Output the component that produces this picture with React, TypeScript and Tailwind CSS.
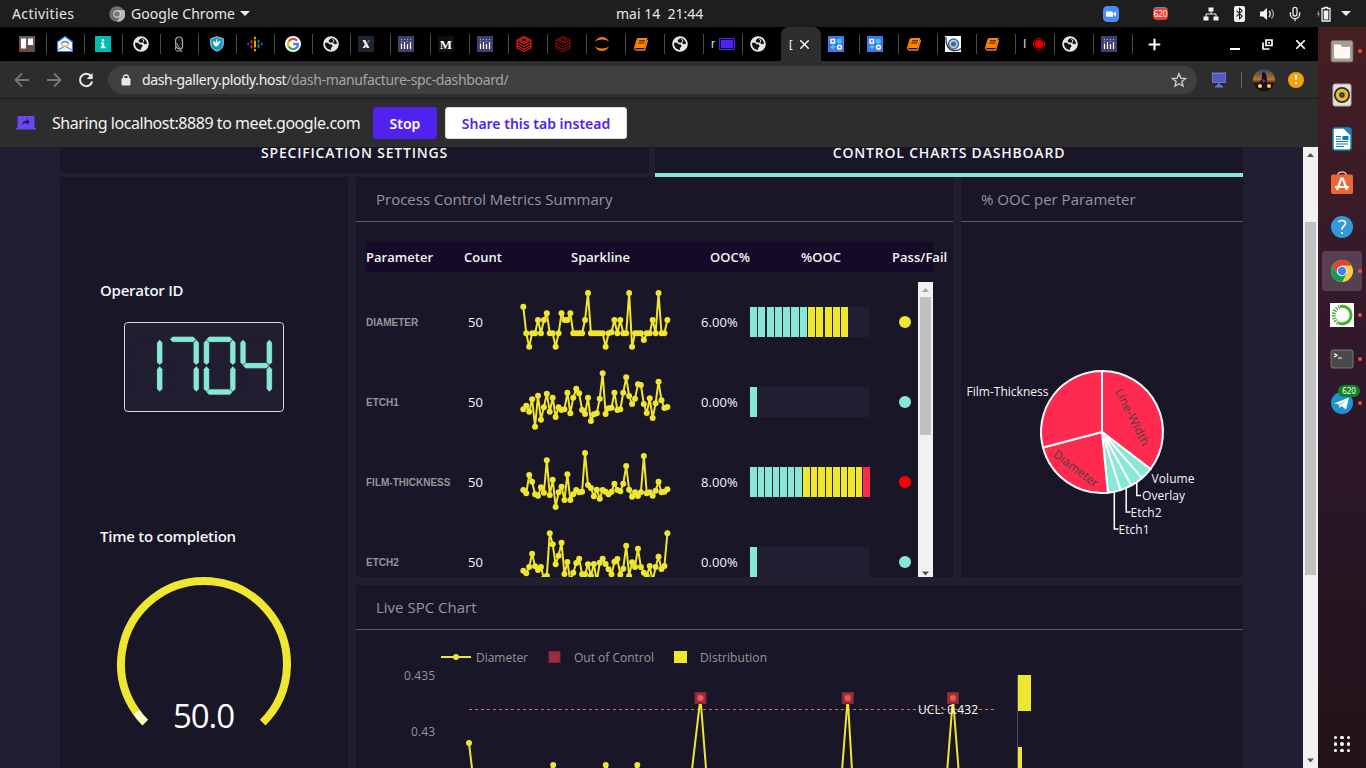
import React from "react";
import { ArrowLeft, ArrowRight, Star, X, Plus, Mic, Bluetooth } from "lucide-react";

const UI = "font-['Noto_Sans',sans-serif]";
const OPEN = "font-['Open_Sans',sans-serif]";

const TEAL = "#87e8d5";
const YELLOW = "#eee62f";

type Tone = "yellow" | "teal" | "red";

interface Metric {
  name: string;
  ooc: string;
  tone: Tone;
  fill: number;
  values: number[];
}

const diameter = [
  110, 190, 230, 190, 190, 150, 190, 150, 130, 190, 190, 230, 190, 130, 150, 150, 130, 190, 190, 190, 190, 150, 69, 190,
  190, 190, 190, 190, 230, 190, 187, 150, 190, 150, 190, 190, 69, 230, 190, 190, 190, 210, 190, 190, 150, 190, 69, 190,
  190, 150,
];
const etch1 = [
  178, 167, 185, 148, 230, 137, 209, 172, 131, 185, 143, 201, 172, 180, 178, 128, 190, 143, 116, 130, 180, 192, 143, 213,
  193, 190, 146, 70, 192, 175, 173, 128, 180, 178, 128, 82, 138, 162, 146, 103, 105, 162, 189, 145, 204, 160, 95, 151,
  174, 171,
];
const film = [
  180, 190, 135, 155, 193, 197, 172, 188, 91, 195, 149, 231, 187, 170, 210, 133, 210, 193, 180, 187, 185, 69, 165, 174,
  199, 179, 206, 180, 185, 193, 185, 161, 180, 184, 161, 108, 179, 200, 187, 198, 187, 78, 190, 187, 197, 182, 155, 187,
  185, 178,
];
const etch2 = [
  182, 190, 171, 131, 169, 180, 171, 205, 197, 70, 103, 163, 137, 98, 192, 156, 214, 188, 159, 146, 193, 193, 163, 197,
  162, 214, 158, 146, 162, 178, 193, 155, 147, 194, 176, 107, 198, 157, 171, 116, 171, 188, 197, 168, 214, 171, 140, 177,
  168, 70,
];

const metrics: Metric[] = [
  { name: "DIAMETER", ooc: "6.00%", tone: "yellow", fill: 12, values: diameter },
  { name: "ETCH1", ooc: "0.00%", tone: "teal", fill: 1, values: etch1 },
  { name: "FILM-THICKNESS", ooc: "8.00%", tone: "red", fill: 16, values: film },
  { name: "ETCH2", ooc: "0.00%", tone: "teal", fill: 1, values: etch2 },
];

function Sparkline({ values }: { values: number[] }) {
  const pts = values.map((v, i) => [7.3 + i * 2.94, v / 3]);
  return (
    <svg className="h-20 w-[160px] shrink-0" viewBox="0 0 160 80">
      <g transform="translate(0,-12)">
        <polyline points={pts.map((p) => p.join(",")).join(" ")} fill="none" stroke={YELLOW} strokeWidth="2" />
        {pts.map((p, i) => (
          <circle key={i} cx={p[0]} cy={p[1]} r="3" fill={YELLOW} />
        ))}
      </g>
    </svg>
  );
}

function GraduatedBar({ fill }: { fill: number }) {
  return (
    <div className={`flex h-[30px] w-[120px] shrink-0 bg-[#211e31] ${fill > 12 ? "gap-px" : ""}`}>
      {Array.from({ length: fill }, (_, i) => (
        <div
          key={i}
          className={`h-full ${fill > 12 ? "flex-1" : "mr-[1.25px] w-[7.05px] shrink-0"} ${
            i < 7 ? "bg-[#87e8d5]" : i < 15 ? "bg-[#eee62f]" : "bg-[#ff2a50]"
          }`}
        />
      ))}
    </div>
  );
}

const dotTone: Record<Tone, string> = {
  yellow: "bg-[#eee62f]",
  teal: "bg-[#87e8d5]",
  red: "bg-[#ff0000]",
};

function MetricRow({ m }: { m: Metric }) {
  return (
    <div className="flex h-20 shrink-0 items-center">
      <div className="w-[102px] text-[10px] font-bold whitespace-nowrap text-[#95969a] font-['Liberation_Sans',sans-serif]">{m.name}</div>
      <div className="w-12 pt-0.5 text-[13px] text-[#f3f5f4]">50</div>
      <Sparkline values={m.values} />
      <div className="ml-[25px] w-[49px] pt-0.5 text-[13px] tracking-[0.05px] text-[#f3f5f4]">{m.ooc}</div>
      <GraduatedBar fill={m.fill} />
      <div className={`ml-[29px] size-3 rounded-full ${dotTone[m.tone]}`} />
    </div>
  );
}

function Triangle({ down, color }: { down?: boolean; color: string }) {
  return (
    <svg className="h-4 w-[15px] shrink-0" viewBox="0 0 15 16">
      <path d={down ? "M4 6.500h7L7.500 10.500z" : "M4 10h7L7.500 6z"} fill={color} />
    </svg>
  );
}

function PanelTitle({ children }: { children: React.ReactNode }) {
  return (
    <div className="flex h-[45px] shrink-0 items-center border-b border-[#5a5864] px-5 text-[15px] text-[#95969a]">
      {children}
    </div>
  );
}

function LedDisplay() {
  const digits = ["bc", "abc", "abcdef", "bcfg"];
  const h = (x: number, y: number) => `${x},${y} ${x + 8},${y - 8} ${x + 70},${y - 8} ${x + 78},${y} ${x + 70},${y + 8} ${x + 8},${y + 8}`;
  const v = (x: number, y: number) => `${x},${y} ${x + 8},${y + 9} ${x + 8},${y + 68} ${x},${y + 76} ${x - 8},${y + 68} ${x - 8},${y + 9}`;
  return (
    <svg className="h-[90px] w-[160px]" viewBox="0 0 480 270">
      <rect x="1.500" y="1.500" width="477" height="267" rx="10" fill="#211e31" stroke="#d8d8dc" strokeWidth="3" />
      {digits.map((d, i) => {
        const r = 107 + i * 109.700;
        const l = r - 79;
        const segs: Record<string, string> = {
          a: h(l, 52),
          b: v(r, 53),
          c: v(r, 133),
          d: h(l, 210),
          e: v(l, 133),
          f: v(l, 53),
          g: h(l, 131),
        };
        return Object.entries(segs).map(([k, p]) => (
          <polygon key={k + i} points={p} fill={d.includes(k) ? TEAL : "#201d30"} stroke={d.includes(k) ? "#55888a" : "#201d30"} strokeWidth="0.8" />
        ));
      })}
    </svg>
  );
}

function Gauge() {
  const pt = (deg: number) => {
    const a = (deg * Math.PI) / 180;
    return `${90 + 83 * Math.cos(a)} ${90 + 83 * Math.sin(a)}`;
  };
  return (
    <svg className="h-[160px] w-[180px] overflow-visible" viewBox="0 0 180 160">
      <path d={`M${pt(145)}A83 83 0 1 1 ${pt(45)}`} fill="none" stroke={YELLOW} strokeWidth="8" />
      <path d={`M${pt(135)}A83 83 0 0 1 ${pt(145)}`} fill="none" stroke="#ffffc2" strokeWidth="8" />
      <text x="90" y="154" textAnchor="middle" fontSize="33" textLength="62" fill="#fff" fontWeight="400" className={OPEN}>50.0</text>
    </svg>
  );
}

function Pie() {
  const cx = 141;
  const cy = 210;
  const r = 61;
  const bounds = [0, 127.4, 139.2, 151.2, 162.4, 174.4, 255.3, 360];
  const fills = ["#ff2a50", TEAL, TEAL, TEAL, TEAL, "#ff2a50", "#ff2a50"];
  const p = (d: number) => {
    const a = ((d - 90) * Math.PI) / 180;
    return `${cx + r * Math.cos(a)} ${cy + r * Math.sin(a)}`;
  };
  return (
    <svg className="h-[355px] w-[282px]" viewBox="0 0 282 355">
      {fills.map((f, i) => (
        <path
          key={i}
          d={`M${cx} ${cy}L${p(bounds[i])}A${r} ${r} 0 0 1 ${p(bounds[i + 1])}Z`}
          fill={f}
          stroke="#fff"
          strokeWidth="2"
          strokeLinejoin="round"
        />
      ))}
      <g fill="none" stroke="#fff" strokeWidth="1.500">
        <path d="M175.800 260.500V273.500H180" />
        <path d="M165.200 266V290H169.500" />
        <path d="M153.300 270V307H157.500" />
      </g>
      <g fontSize="12" fill="#f5f5f5">
        <text x="5.500" y="174" textLength="82">Film-Thickness</text>
        <text x="190.500" y="261" textLength="43">Volume</text>
        <text x="181" y="278" textLength="43">Overlay</text>
        <text x="169.500" y="295" textLength="31">Etch2</text>
        <text x="157.500" y="312" textLength="31">Etch1</text>
      </g>
      <g fontSize="12" fill="#444" textAnchor="middle">
        <text transform="translate(167.500 197) rotate(63.500)" textLength="62">Line-Width</text>
        <text transform="translate(112.500 250) rotate(36.500)" textLength="53">Diameter</text>
      </g>
    </svg>
  );
}

function SpcChart() {
  const x = (i: number) => 469 + i * 10.52;
  const y = (v: number) => 698 + (v - 69) * 1.1;
  return (
    <svg className="h-[138px] w-[887px]" viewBox="356 630 887 138">
      <path d="M441 657h30" stroke={YELLOW} strokeWidth="2" />
      <circle cx="456" cy="657" r="3" fill={YELLOW} />
      <rect x="549" y="651.500" width="11" height="11" fill="#a02c42" stroke="#7d2439" />
      <rect x="674" y="651" width="13" height="12" fill={YELLOW} />
      <g fontSize="12" fill="#95969a">
        <text x="476" y="662" textLength="52">Diameter</text>
        <text x="574" y="662" textLength="80">Out of Control</text>
        <text x="700" y="662" textLength="67">Distribution</text>
        <text x="404" y="680" textLength="31">0.435</text>
        <text x="411" y="736" textLength="24">0.43</text>
      </g>
      <path d="M469 709.500H995" stroke="#e0704c" strokeWidth="1" strokeDasharray="3 3" />
      <polyline points={diameter.map((v, i) => `${x(i)},${y(v)}`).join(" ")} fill="none" stroke={YELLOW} strokeWidth="2" />
      {diameter.map((v, i) => (
        <circle key={i} cx={x(i)} cy={y(v)} r="3" fill={YELLOW} />
      ))}
      {[22, 36, 46].map((i) => (
        <g key={i}>
          <rect x={x(i) - 5.5} y="692.500" width="11" height="11" fill="#a02c42" stroke="#7d2439" />
          <circle cx={x(i)} cy="698" r="3" fill="#e4633f" />
        </g>
      ))}
      <text x="918" y="714" fontSize="12" textLength="60" fill="#fff">UCL: 0.432</text>
      <path d="M1017.500 675V768" stroke="#4c4a58" />
      <rect x="1018" y="675" width="13" height="36" fill={YELLOW} />
      <rect x="1018" y="747" width="4" height="21" fill={YELLOW} />
    </svg>
  );
}

/* ---------- browser tab favicons ---------- */

function Svg16({ children }: { children: React.ReactNode }) {
  return <svg className="size-4 shrink-0" viewBox="0 0 16 16">{children}</svg>;
}

const Globe = () => (
  <Svg16>
    <circle cx="8" cy="8" r="7.200" fill="#e6e6e6" />
    <path d="M1.500 6.800H5l1.300 1.500 2.400.2 1 1.500-1.600 2-.2 2.200Q1.500 14 1.500 6.800zM7 3l3-1.600q3.500 1 4.300 4.300l-.5 2.300-2.300.3-1.300-1.500-3.400-.3L5.500 5z" fill="#111" />
    <path d="M9.500 3l1.500 2-1.200 1.500" fill="none" stroke="#e6e6e6" strokeWidth="1" />
    <circle cx="8" cy="8" r="6.900" fill="none" stroke="#e6e6e6" strokeWidth="1.800" />
  </Svg16>
);

const Trello = () => (
  <Svg16>
    <rect width="16" height="16" rx="1" fill="#6f5a63" />
    <path d="M0 10h16v6H0z" fill="#6b4a42" />
    <path d="M2 2.500h5v10H2zM9 2.500h5v6.500H9z" fill="#fff" />
  </Svg16>
);
const House = () => (
  <Svg16>
    <path d="M8 .5L15.500 6v9.500H.5V6z" fill="#fff" stroke="#3b78d8" strokeWidth="1.200" />
    <path d="M1 14l7-4 7 4" fill="#e8f0fe" stroke="#3b78d8" />
    <path d="M4 7.500Q8 3.500 12 7.500" fill="none" stroke="#4c8be8" strokeWidth="1.500" />
    <path d="M4 8q4 5 8 0" fill="none" stroke="#f0b83a" strokeWidth="1.500" />
  </Svg16>
);
const InfoTile = () => (
  <Svg16>
    <path d="M0 0h16v16H0z" fill="#00bdb4" />
    <path d="M6 6.200h3.200v4.300h1.300v1.800H5.800v-1.800h1V8H6zM6.800 3.300h2.400v1.900H6.800z" fill="#e5ffff" />
  </Svg16>
);
const Clip = () => (
  <Svg16>
    <path d="M4.500 5q0-4 3.500-4t3.500 4v5.500q0 2.500-2.500 2.500-3 0-4.200-3z" fill="#111" stroke="#aaa" strokeWidth="1.200" />
    <path d="M5.500 7l4.500 7.500M4.500 11v2.500q0 1.500 3 1.500h4" fill="none" stroke="#aaa" />
  </Svg16>
);
const Shield = () => (
  <Svg16>
    <path d="M8 .7l6.300 2v5.500q0 4.500-6.300 7.100-6.300-2.600-6.300-7.100V2.700z" fill="#1597d1" stroke="#d7eef8" strokeWidth=".8" />
    <path d="M5 5l2 2V3.500h1.300V7L11 4.500l.6 1-2 3.300q-2 3-4.500.5L4 6.500z" fill="#fff" />
  </Svg16>
);
const Podcasts = () => (
  <Svg16>
    <g strokeWidth="1.900" strokeLinecap="round" fill="none">
      <path d="M1.200 7.500v1" stroke="#4b31e8" />
      <path d="M14.800 7.500v1" stroke="#4b31e8" />
      <path d="M4.500 5v2M4.500 10v1.500" stroke="#d93025" />
      <path d="M8 1.500v1M8 5.200v5.600M8 13.700v.8" stroke="#f9ab00" />
      <path d="M11.500 4.500V6M11.500 8.500v3" stroke="#18943d" />
    </g>
  </Svg16>
);
const Google = () => (
  <Svg16>
    <circle cx="8" cy="8" r="8" fill="#fff" />
    <g fill="none" strokeWidth="2.300">
      <path d="M12 4.700A5 5 0 0 0 3.800 5.400" stroke="#ea4335" />
      <path d="M3.800 5.300a5 5 0 0 0 0 5.300" stroke="#fbbc05" />
      <path d="M3.700 10.500a5 5 0 0 0 7.700 1.400" stroke="#34a853" />
      <path d="M11.300 12A5 5 0 0 0 13 8H8" stroke="#4285f4" />
    </g>
  </Svg16>
);
const XTile = () => (
  <Svg16>
    <path d="M0 0h16v16H0z" fill="#202431" />
    <path d="M4.500 4h2.800l4.200 8H8.800z" fill="#f2f2f2" />
    <path d="M7 8.500L4.500 12h2.300l1.500-2z" fill="#f2f2f2" />
    <path d="M9 6.500L10.500 4h1.700L9.800 7.700z" fill="#3d6fb8" />
  </Svg16>
);
const Plotly = () => (
  <Svg16>
    <path d="M0 0h16v16H0z" fill="#453f74" />
    <path d="M3.500 7.500V13M6.500 6v7M9.500 8v5M12.500 6v7" stroke="#fff" strokeWidth="1.200" />
    <path d="M3.500 3v3M6.500 3v2M9.500 3v4M12.500 3v2" stroke="#6fd6c0" strokeWidth="1.100" strokeDasharray="1 1" />
  </Svg16>
);
const Medium = () => (
  <div className="flex size-4 shrink-0 items-center justify-center bg-[#12100e] font-['Liberation_Serif',serif] text-[13px] leading-none font-bold text-white">M</div>
);
const Stack = ({ color }: { color: string }) => (
  <Svg16>
    <g fill="none" stroke={color} strokeWidth="1.200" strokeLinejoin="round">
      <path d="M1 4l7-3.500L15 4 8 7.500zM1 4v3l7 3.500L15 7V4M1 7v2.800l7 3.500 7-3.500V7M1 9.800V12l7 3.500 7-3.500V9.800" />
      <path d="M4 4l4-2 4 2-4 2z" />
    </g>
  </Svg16>
);
const Jupyter = () => (
  <Svg16>
    <path d="M1 5.500Q3.500 1 8 1t7 4.500Q12 3.600 8 3.600T1 5.500zM1 10.500Q3.500 15 8 15t7-4.500q-3 1.900-7 1.900t-7-1.900z" fill="#f57c00" />
  </Svg16>
);
const Book = () => (
  <Svg16>
    <path d="M5 2h9.500l-3 10H2z" fill="#ff8400" />
    <path d="M6 4.800h6M5.300 7h6" stroke="#2a1500" strokeWidth="1" />
    <path d="M4.500 2.500L1.500 12q.2 2 2 2h8l3-10" fill="none" stroke="#ff8400" strokeWidth="1.300" />
  </Svg16>
);
const Presenting = () => (
  <Svg16>
    <path d="M.5 2.500h15v11H.5z" fill="#0a0630" stroke="#5022f0" />
    <path d="M2 4h12v8H2z" fill="#5022f0" />
  </Svg16>
);
const BlueTile = () => (
  <Svg16>
    <path d="M0 0h16v16H0z" fill="#4674ee" />
    <g fill="none" stroke="#fff" strokeWidth="1.500">
      <path d="M3 3.500h3.500V7H3z" />
      <circle cx="11.500" cy="11.200" r="1.900" />
    </g>
    <path d="M8.500 5.200q.2-2.600 2.700-2.700t2.500 2.600-2.500 2.500-2.700-2.400z" fill="#29d3f5" />
    <path d="M5 8.800v4.500M2.700 11h4.600" stroke="#29d3f5" strokeWidth="1.800" />
  </Svg16>
);
const Camera = () => (
  <Svg16>
    <path d="M0 0h16v16H0z" fill="#fff" />
    <circle cx="8.500" cy="8" r="5" fill="#b7d4ee" stroke="#2e6db4" strokeWidth="1.500" />
    <circle cx="8.500" cy="8" r="2.600" fill="#666" />
    <path d="M1 1q-.5 12 7 13.500 5 .8 8-2" fill="none" stroke="#333" strokeWidth="1.300" />
  </Svg16>
);
const Record = () => (
  <Svg16>
    <circle cx="8" cy="8" r="5.600" fill="none" stroke="#c00" strokeWidth="1" />
    <circle cx="8" cy="8" r="4.300" fill="#e00000" />
  </Svg16>
);

interface Tab {
  icon: React.ReactNode;
  width: string;
  label?: string;
}

const W38 = "w-[38px] pl-2.5 border-r";
const W40 = "w-10 pl-[7px] border-r";
const W39 = "w-[39px] pl-[7px] border-r";
const leftTabs: Tab[] = [
  { icon: <Trello />, width: W38 },
  { icon: <House />, width: W38 },
  { icon: <InfoTile />, width: W38 },
  { icon: <Globe />, width: W38 },
  { icon: <Clip />, width: W38 },
  { icon: <Shield />, width: W38 },
  { icon: <Podcasts />, width: W38 },
  { icon: <Google />, width: W38 },
  { icon: <Globe />, width: W38 },
  { icon: <XTile />, width: W40 },
  { icon: <Plotly />, width: W40 },
  { icon: <Medium />, width: W39 },
  { icon: <Plotly />, width: W39 },
  { icon: <Stack color="#e2211c" />, width: W39 },
  { icon: <Stack color="#7a0d0d" />, width: W39 },
  { icon: <Jupyter />, width: W39 },
  { icon: <Book />, width: W39 },
  { icon: <Globe />, width: W39 },
  { icon: <Presenting />, width: W39, label: "r" },
  { icon: <Globe />, width: "w-[38px] pl-[7px]" },
];
const rightTabs: Tab[] = [
  { icon: <BlueTile />, width: W39 },
  { icon: <BlueTile />, width: W39 },
  { icon: <Book />, width: W39 },
  { icon: <Camera />, width: W39 },
  { icon: <Book />, width: W39 },
  { icon: <Record />, width: W39, label: "I" },
  { icon: <Globe />, width: W39 },
  { icon: <Plotly />, width: W39 },
];

function TabCell({ tab }: { tab: Tab }) {
  return (
    <div className={`flex h-5 shrink-0 items-center border-[#4b4b4b] ${tab.width}`}>
      {tab.label && <span className="w-2 shrink-0 font-['Liberation_Sans',sans-serif] text-[12px] text-[#ddd]">{tab.label}</span>}
      {tab.icon}
    </div>
  );
}

/* ---------- dock ---------- */

const dockIcons: { id: string; running?: boolean; active?: boolean; art: React.ReactNode }[] = [
  {
    id: "files",
    running: true,
    art: (
      <>
        <rect x="1" y="1.500" width="22" height="21.500" rx="2" fill="#a79f90" stroke="#6d665b" />
        <path d="M4 5.500h6.500l1.500 2.500h8v10.500q0 1-1 1H5q-1 0-1-1z" fill="#fbfaf8" />
      </>
    ),
  },
  {
    id: "rhythmbox",
    art: (
      <>
        <rect x="3" y="1" width="18" height="22" rx="2" fill="#e5e1d8" stroke="#b5afa3" />
        <circle cx="12" cy="12" r="8" fill="#2b2b2b" />
        <circle cx="12" cy="12" r="4.500" fill="none" stroke="#e9b92c" strokeWidth="3.500" />
        <circle cx="12" cy="12" r="1.500" fill="#555" />
      </>
    ),
  },
  {
    id: "writer",
    art: (
      <>
        <path d="M5 1h9l7 7v13q0 2-2 2H5q-2 0-2-2V3q0-2 2-2z" fill="#fff" stroke="#1584c0" strokeWidth="1.500" />
        <path d="M13 .3h6q2.700 0 2.700 2.700v6z" fill="#1584c0" />
        <path d="M6 9.500h5M6 12h5M6 14.500h12M6 17h12M6 19.500h8" stroke="#1177b0" strokeWidth="1.200" />
        <path d="M12.500 9h6v4h-6z" fill="#1177b0" />
      </>
    ),
  },
  {
    id: "software",
    art: (
      <>
        <path d="M8 4q0-3 4-3t4 3" fill="none" stroke="#e9b89a" strokeWidth="1.500" />
        <rect x="1" y="3.500" width="22" height="19.500" rx="2" fill="#ee6630" />
        <path d="M7 19l4.200-11.500h1.600L17 19M5 16h14" fill="none" stroke="#fff" strokeWidth="2.200" />
      </>
    ),
  },
  {
    id: "help",
    art: (
      <>
        <circle cx="12" cy="12" r="11" fill="#3498dd" />
        <path d="M8.500 7q1.500-1.500 3.500-1.500 3.500 0 3.500 2.700 0 1.700-2 3.200-1.700 1.300-1.600 3.300M12 17v2" fill="none" stroke="#fff" strokeWidth="1.700" />
      </>
    ),
  },
  {
    id: "chrome",
    running: true,
    active: true,
    art: (
      <>
        <circle cx="12" cy="12" r="11" fill="#ffcd40" />
        <path d="M2.500 6.500A11 11 0 0 1 21.500 6.500H12L7.200 14.700z" fill="#db4437" />
        <path d="M2.500 6.500A11 11 0 0 0 12 23l4.800-8.200H7.200z" fill="#0f9d58" />
        <circle cx="12" cy="12" r="5.200" fill="#f1f1f1" />
        <circle cx="12" cy="12" r="4.200" fill="#4285f4" />
      </>
    ),
  },
  {
    id: "anaconda",
    running: true,
    art: (
      <>
        <path d="M0 0h24v24H0z" fill="#fff" />
        <path d="M10 3.500A8.800 8.800 0 1 1 8.500 20" fill="none" stroke="#43b02a" strokeWidth="3" />
        <path d="M9.500 4A8.800 8.800 0 0 0 8.500 20" fill="none" stroke="#43b02a" strokeWidth="4" strokeDasharray="1.300 1.300" />
      </>
    ),
  },
  {
    id: "terminal",
    running: true,
    art: (
      <>
        <rect x="1" y="3" width="22" height="18" rx="2" fill="#4a4a4a" stroke="#777" />
        <path d="M4 6.500l3 1.800-3 1.800M8 11h4" fill="none" stroke="#fff" strokeWidth="1.200" />
      </>
    ),
  },
  {
    id: "telegram",
    running: true,
    art: (
      <>
        <circle cx="12" cy="12" r="11" fill="#2192cf" />
        <path d="M4 12.500l15-6-3 12-4.500-3.500-2.200 2-.7-4z" fill="#fff" />
        <path d="M8.600 13L17 8l-6 6.500-1.700 2.500z" fill="#bcd8e8" />
      </>
    ),
  },
];

function Dock() {
  return (
    <aside className="flex w-12 shrink-0 flex-col items-center bg-linear-to-b from-[#451e22] via-[#2d172c] to-[#211318] pt-0.5">
      {dockIcons.map((d) => (
        <div key={d.id} className="relative flex h-11 w-full shrink-0 items-center justify-center">
          <div className={`flex size-10 items-center justify-center rounded ${d.active ? "bg-[#56404f]" : ""}`}>
            <svg className="size-6" viewBox="0 0 24 24">{d.art}</svg>
          </div>
          {d.running && <i className="absolute top-5 right-1 size-1 rounded-full bg-[#e95420]" />}
          {d.id === "telegram" && (
            <b className="absolute top-[4px] left-[20px] flex h-3 w-[22px] items-center justify-center rounded-full bg-[#0e8420] text-[8px] leading-none font-normal text-white">620</b>
          )}
        </div>
      ))}
      <div className="mt-auto mb-4 grid grid-cols-3 gap-[3px]">
        {Array.from({ length: 9 }, (_, i) => (
          <i key={i} className="size-[3.300px] rounded-full bg-white" />
        ))}
      </div>
    </aside>
  );
}

/* ---------- desktop bar ---------- */

function TopBar() {
  return (
    <header className="flex h-[27px] shrink-0 items-center bg-[#1e1e1e] text-[14px] text-[#e6e6e6]">
      <span className="ml-3 w-[97px] tracking-[0.4px]">Activities</span>
      <svg className="size-4" viewBox="0 0 16 16">
        <circle cx="8" cy="8" r="7.800" fill="#6e6e6e" />
        <path d="M8 4h7.200a7.800 7.800 0 0 1-7.500 11.800L11.500 10z" fill="#b8b8b8" />
        <circle cx="8" cy="8" r="3.700" fill="#ddd" />
        <circle cx="8" cy="8" r="2.800" fill="#777" />
      </svg>
      <span className="ml-1.5 w-[104px] tracking-[0.05px] whitespace-nowrap">Google Chrome</span>
      <svg className="ml-[5px] h-[5px] w-2.5" viewBox="0 0 10 5"><path d="M0 0h10L5 5z" fill="#eee" /></svg>
      <span className="ml-[366px] w-[90px] whitespace-pre">{"mai 14  21:44"}</span>
      <svg className="ml-[397px] size-4" viewBox="0 0 16 16">
        <rect width="16" height="16" rx="4.500" fill="#4a8cff" />
        <path d="M3 5.500h5.500q1.500 0 1.500 1.500v3.700H4.500Q3 10.700 3 9.200zM10.500 7.300L13 5.500v5l-2.500-1.700z" fill="#fff" />
      </svg>
      <div className="ml-[34px] flex h-[13px] w-[15px] items-center justify-center rounded-sm border-t border-[#2c9bd0] bg-[#f03c32] text-[8px] leading-none text-white">620</div>
      <svg className="ml-[35px] size-4" viewBox="0 0 16 16">
        <path d="M5.500 1.500h5v4h-5zM.5 10.500h5v4h-5zM10.500 10.500h5v4h-5z" fill="#f2f2f2" />
        <path d="M8 5v3M3 11V8h10v3" fill="none" stroke="#f2f2f2" />
      </svg>
      <span className="ml-[15px] flex h-4 w-[11px] items-center justify-center rounded-xs bg-[#f2f2f2] text-[#1e1e1e]">
        <Bluetooth className="shrink-0" size={13} strokeWidth={2} />
      </span>
      <svg className="ml-[14px] h-4 w-[17px]" viewBox="0 0 17 16">
        <path d="M1 5.500h3L8 2v12L4 10.500H1z" fill="#f2f2f2" />
        <path d="M10 5q2.500 3 0 6" fill="none" stroke="#f2f2f2" strokeWidth="1.300" />
        <path d="M12.500 3.500q4 4.500 0 9" fill="none" stroke="#aaa" strokeWidth="1.200" />
      </svg>
      <Mic className="ml-[11px]" size={16} strokeWidth={2} />
      <svg className="ml-[13px] h-4 w-[15px]" viewBox="0 0 15 16">
        <path d="M3 4L1 8.500h1.500L2 12l2-4.500H2.800z" fill="#aaa" />
        <path d="M6 2.500h2.500v-1h3v1H14v12.500H6z" fill="none" stroke="#f2f2f2" strokeWidth="1.300" />
        <path d="M7.700 4.500h4.600v9H7.700z" fill="#f2f2f2" />
      </svg>
      <svg className="ml-[10px] h-[5px] w-2.5" viewBox="0 0 10 5"><path d="M0 0h10L5 5z" fill="#eee" /></svg>
    </header>
  );
}

function BrowserChrome() {
  return (
    <>
      <div className="flex h-[34px] shrink-0 items-center bg-black pl-[9px]">
        {leftTabs.map((t, i) => <TabCell key={i} tab={t} />)}
        <div className="flex h-full w-10 shrink-0 items-center rounded-t-lg bg-[#2d2d2d] pl-2 text-[11px] text-white">
          <span className="w-2">[</span>
          <X size={15} strokeWidth={2.2} />
        </div>
        {rightTabs.map((t, i) => <TabCell key={i} tab={t} />)}
        <Plus className="ml-[13px] text-white" size={17} strokeWidth={3} />
        <div className="mt-[9px] ml-[67px] h-0.5 w-2.5 bg-white" />
        <svg className="ml-[22px] size-[11px]" viewBox="0 0 11 11">
          <path d="M4 1h6v5.500H4zM1 3.500v6.500h6.500" fill="none" stroke="#fff" strokeWidth="1.700" />
          <path d="M6 3h2v1.500H6z" fill="#fff" />
        </svg>
        <X className="ml-[20px] text-white" size={15} strokeWidth={2.8} />
      </div>
      <div className="flex h-[37px] shrink-0 items-center bg-[#2d2d2d] text-[#e8eaed]">
        <svg className="ml-[14px] h-4 w-4" viewBox="0 0 16 16">
          <path d="M15 8H2M8 1.500L1.500 8 8 14.500" fill="none" stroke="#777" strokeWidth="1.800" />
        </svg>
        <svg className="ml-4 h-4 w-4" viewBox="0 0 16 16">
          <path d="M1 8h13M8 1.500L14.500 8 8 14.500" fill="none" stroke="#777" strokeWidth="1.800" />
        </svg>
        <svg className="ml-[15px] size-[18px]" viewBox="0 0 18 18">
          <path d="M14 5A6.200 6.200 0 1 0 15.200 10.500" fill="none" stroke="#e8e8e8" strokeWidth="2" />
          <path d="M15.700 2v6H9.700z" fill="#e8e8e8" />
        </svg>
        <div className="ml-[13px] flex h-7 w-[1089px] items-center rounded-full bg-[#3f3f3f] pr-[10px] pl-[13px]">
          <svg className="h-3 w-[10px]" viewBox="0 0 10 12">
            <path d="M1 4.500h8V11H1z" fill="#e8e8e8" stroke="#e8e8e8" strokeWidth="1" strokeLinejoin="round" />
            <path d="M2.700 4.500V3q0-2 2.300-2t2.300 2v1.500" fill="none" stroke="#e8e8e8" strokeWidth="1.300" />
          </svg>
          <span className="ml-[11px] text-[14px] tracking-[-0.35px] whitespace-nowrap text-[#f1f1f1]">
            dash-gallery.plotly.host<span className="text-[#a5a5a5]">/dash-manufacture-spc-dashboard/</span>
          </span>
          <svg className="ml-auto size-4" viewBox="0 0 16 16">
            <path d="M8 1.800l1.800 4.300 4.700.4-3.600 3 1.100 4.600L8 11.700l-4 2.400 1.100-4.600-3.600-3 4.700-.4z" fill="none" stroke="#ccc" strokeWidth="1.400" />
          </svg>
        </div>
        <svg className="ml-[14px] size-4" viewBox="0 0 16 16">
          <path d="M.5 1h15M1.500 1.500h13v9h-13z" fill="#5259c4" stroke="#7277cb" />
          <path d="M8 10.500v3M4 15l4-3 4 3z" fill="#7277cb" stroke="#7277cb" />
        </svg>
        <div className="ml-[14px] h-4 w-px bg-[#666]" />
        <svg className="ml-[11px] size-[22px]" viewBox="0 0 22 22">
          <defs>
            <linearGradient id="sunset" x1="0" y1="0" x2="0" y2="1">
              <stop offset="0" stopColor="#34435f" />
              <stop offset=".48" stopColor="#ba762b" />
              <stop offset=".65" stopColor="#27170e" />
              <stop offset="1" stopColor="#110d0a" />
            </linearGradient>
          </defs>
          <circle cx="11" cy="11" r="11" fill="url(#sunset)" />
          <path d="M9 4q2-2 4 1l1 5-1 7H8l-1-4 2-4z" fill="#17101a" />
          <path d="M8 9l5 3-3 2z" fill="#7027aa" />
          <circle cx="7" cy="17" r="2" fill="#f5d36a" />
          <circle cx="16" cy="17" r="2" fill="#f5c44a" />
        </svg>
        <div className="ml-[13px] flex size-4 flex-col items-center justify-center gap-0.5 rounded-full bg-[#f5a30a]">
          <i className="h-[5px] w-0.5 bg-white" />
          <i className="size-0.5 bg-white" />
        </div>
      </div>
      <div className="flex h-[49px] shrink-0 items-center border-t border-[#1c1c1c] bg-[#2d2d2d] text-[16px]">
        <svg className="ml-4 h-4 w-5" viewBox="0 0 20 16">
          <path d="M1.500 2q0-1 1-1h15q1 0 1 1v11h-17z" fill="#6a46f5" />
          <path d="M0 13h20v1.500H0z" fill="#6a46f5" />
          <path d="M6 10q0-4 4.500-4.500V3.500L14 7l-3.500 3V8Q7.500 8 6 10z" fill="#2a1f55" />
        </svg>
        <span className="ml-4 w-[309px] tracking-[-0.44px] whitespace-nowrap text-[#f3f3f3]">Sharing localhost:8889 to meet.google.com</span>
        <div className="ml-3 flex h-8 w-16 items-center justify-center rounded-[3px] bg-[#5022f0] text-[14px] font-semibold text-white">Stop</div>
        <div className="ml-2 flex h-8 w-[182px] items-center justify-center rounded-[3px] border border-[#ddd] bg-white text-[14px] font-semibold whitespace-nowrap text-[#5022f0]">Share this tab instead</div>
      </div>
    </>
  );
}

function Dashboard() {
  return (
    <main className={`flex min-w-0 flex-1 flex-col bg-[#211e31] px-[60px] ${OPEN}`}>
      <nav className="flex h-[30px] shrink-0 gap-1.5 overflow-hidden text-[14px] leading-3 font-semibold tracking-[0.8px] text-[#f3f5f4]">
        <div className="w-[589px] border-b-4 border-[#211e31] bg-[#191627] text-center">SPECIFICATION SETTINGS</div>
        <div className="w-[588px] border-b-4 border-[#87e8d5] bg-[#191627] text-center">CONTROL CHARTS DASHBOARD</div>
      </nav>
      <div className="flex min-h-0 flex-1 gap-2">
        <section className="flex w-[288px] shrink-0 flex-col bg-[#191627] pt-[102px] text-[15px] font-semibold text-[#f3f5f4]">
          <h2 className="ml-10 h-[22px] leading-[22px] tracking-[-0.25px]">Operator ID</h2>
          <div className="mt-[21px] ml-16 flex h-[90px]"><LedDisplay /></div>
          <h2 className="mt-[113px] ml-10 h-[22px] leading-[22px] tracking-[-0.25px]">Time to completion</h2>
          <div className="mt-[27px] ml-[54px] flex"><Gauge /></div>
        </section>
        <div className="flex w-[887px] shrink-0 flex-col gap-2">
          <div className="flex h-[400px] shrink-0 gap-2">
            <section className="flex w-[597px] shrink-0 flex-col bg-[#191627]">
              <PanelTitle>Process Control Metrics Summary</PanelTitle>
              <div className="mt-5 ml-2.5 flex h-[30px] w-[567px] shrink-0 items-center bg-[#150b29] pt-0.5 text-[13px] font-semibold tracking-[0.03px] whitespace-nowrap text-[#f3f5f4]">
                <span className="w-[98px] shrink-0">Parameter</span>
                <span className="w-[107px] shrink-0">Count</span>
                <span className="w-[139px] shrink-0">Sparkline</span>
                <span className="w-[91px] shrink-0">OOC%</span>
                <span className="w-[91px] shrink-0">%OOC</span>
                <span className="shrink-0">Pass/Fail</span>
              </div>
              <div className="mt-2.5 ml-2.5 flex min-h-0 w-[567px] flex-1">
                <div className="flex min-w-0 flex-1 flex-col overflow-hidden">
                  {metrics.map((m) => <MetricRow key={m.name} m={m} />)}
                </div>
                <div className="flex w-[15px] shrink-0 flex-col bg-[#f1f1f1]">
                  <Triangle color="#a3a3a3" />
                  <div className="mx-0.5 -mt-px h-[138px] bg-[#c1c1c1]" />
                  <div className="-mb-1 mt-auto flex"><Triangle down color="#505050" /></div>
                </div>
              </div>
            </section>
            <section className="flex w-[282px] shrink-0 flex-col bg-[#191627]">
              <PanelTitle>% OOC per Parameter</PanelTitle>
              <Pie />
            </section>
          </div>
          <section className="flex min-h-0 flex-1 flex-col overflow-hidden bg-[#191627]">
            <PanelTitle>Live SPC Chart</PanelTitle>
            <SpcChart />
          </section>
        </div>
      </div>
    </main>
  );
}

export default function App() {
  return (
    <div className={`flex h-[768px] w-[1366px] flex-col overflow-hidden ${UI}`}>
      <TopBar />
      <div className="flex min-h-0 flex-1">
        <div className="flex w-[1318px] shrink-0 flex-col">
          <BrowserChrome />
          <div className="flex min-h-0 flex-1">
            <Dashboard />
            <div className="flex w-[15px] shrink-0 flex-col bg-[#f1f1f1]">
              <Triangle color="#505050" />
              <div className="mx-0.5 mt-[59px] h-[353px] bg-[#c1c1c1]" />
              <div className="mt-auto flex"><Triangle down color="#505050" /></div>
            </div>
          </div>
        </div>
        <Dock />
      </div>
    </div>
  );
}
